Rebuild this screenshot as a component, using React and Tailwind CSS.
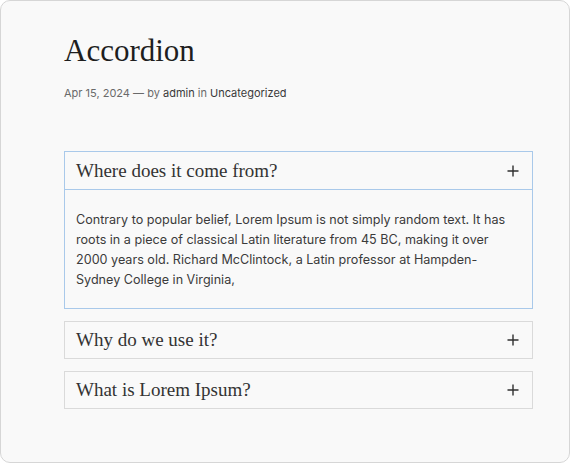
import { useState } from "react";

const items = [
  {
    title: "Where does it come from?",
    body: "Contrary to popular belief, Lorem Ipsum is not simply random text. It has roots in a piece of classical Latin literature from 45 BC, making it over 2000 years old. Richard McClintock, a Latin professor at Hampden-Sydney College in Virginia,",
  },
  { title: "Why do we use it?", body: "It is a long established fact that a reader will be distracted by the readable content of a page when looking at its layout." },
  { title: "What is Lorem Ipsum?", body: "Lorem Ipsum is simply dummy text of the printing and typesetting industry." },
];

const PlusIcon = () => (
  <svg width="12" height="12" viewBox="0 0 12 12" fill="none" stroke="#2f2f2f" strokeWidth="1.4">
    <path d="M6 0.5v11M0.5 6h11" />
  </svg>
);

export default function App() {
  const [open, setOpen] = useState(0);

  return (
    <div className="w-[570px] h-[463px] box-border border border-[#d6d6d6] rounded-[10px] bg-[#f9f9f9] overflow-hidden font-['Inter',sans-serif]">
      <div className="pl-[63px] pr-[36px] pt-[30px]">
        <h1 className="font-['Liberation_Serif',serif] text-[31px] leading-[40px] text-[#1e1e1e]">
          Accordion
        </h1>
        <div className="mt-[14px] text-[11px] leading-[16px] text-[#6a6a6a]">
          Apr 15, 2024 — by <span className="text-[#3a3a3a]">admin</span> in{" "}
          <span className="text-[#3a3a3a]">Uncategorized</span>
        </div>

        <div className="mt-[50px] flex flex-col gap-[12px]">
          {items.map((item, i) => {
            const isOpen = open === i;
            return (
              <div
                key={item.title}
                className={
                  isOpen
                    ? "border border-[#a9c9ea] bg-[#f9f9f9]"
                    : "border border-[#dadada] bg-[#f9f9f9]"
                }
              >
                <button
                  onClick={() => setOpen(isOpen ? -1 : i)}
                  className={
                    isOpen
                      ? "w-full h-[37px] flex items-center justify-between pl-[11px] pr-[13px] text-left"
                      : "w-full h-[36px] flex items-center justify-between pl-[11px] pr-[13px] text-left"
                  }
                >
                  <span className="font-['Liberation_Serif',serif] text-[19px] leading-[24px] text-[#333]">
                    {item.title}
                  </span>
                  <PlusIcon />
                </button>
                {isOpen && (
                  <div className="border-t border-[#a9c9ea] pl-[11px] pr-[14px] pt-[20px] pb-[18px] text-[12.6px] leading-[20px] text-[#3b3b3b]">
                    {item.body}
                  </div>
                )}
              </div>
            );
          })}
        </div>
      </div>
    </div>
  );
}
